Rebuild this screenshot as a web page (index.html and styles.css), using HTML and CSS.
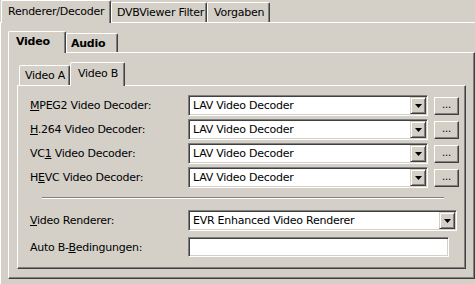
FILE: index.html
```html
<!DOCTYPE html>
<html>
<head>
<meta charset="utf-8">
<link rel="stylesheet" href="styles.css">
</head>
<body>
<div class="outer">
  <div class="strip strip-outer">
    <div class="tab tab-o active t-rd">Renderer/Decoder</div>
    <div class="tab tab-o t-dvb">DVBViewer Filter</div>
    <div class="tab tab-o t-vor">Vorgaben</div>
  </div>
  <div class="pane pane-outer">
    <div class="strip strip-mid">
      <div class="tab tab-m active t-video">Video</div>
      <div class="tab tab-m t-audio">Audio</div>
    </div>
    <div class="pane pane-mid">
      <div class="strip strip-in">
        <div class="tab tab-i t-va">Video A</div>
        <div class="tab tab-i active t-vb">Video B</div>
      </div>
      <div class="pane pane-in">
        <div class="decoders">
          <div class="label"><u>M</u>PEG2 Video Decoder:</div>
          <div class="combo"><span class="val">LAV Video Decoder</span><span class="drop"><svg width="7" height="4" viewBox="0 0 7 4"><polygon points="0,0 7,0 3.5,4" fill="#000"/></svg></span></div>
          <div class="btn">...</div>

          <div class="label"><u>H</u>.264 Video Decoder:</div>
          <div class="combo"><span class="val">LAV Video Decoder</span><span class="drop"><svg width="7" height="4" viewBox="0 0 7 4"><polygon points="0,0 7,0 3.5,4" fill="#000"/></svg></span></div>
          <div class="btn">...</div>

          <div class="label">VC<u>1</u> Video Decoder:</div>
          <div class="combo"><span class="val">LAV Video Decoder</span><span class="drop"><svg width="7" height="4" viewBox="0 0 7 4"><polygon points="0,0 7,0 3.5,4" fill="#000"/></svg></span></div>
          <div class="btn">...</div>

          <div class="label">H<u>E</u>VC Video Decoder:</div>
          <div class="combo"><span class="val">LAV Video Decoder</span><span class="drop"><svg width="7" height="4" viewBox="0 0 7 4"><polygon points="0,0 7,0 3.5,4" fill="#000"/></svg></span></div>
          <div class="btn">...</div>
        </div>
        <div class="sep"></div>
        <div class="lower">
          <div class="row">
            <div class="label"><u>V</u>ideo Renderer:</div>
            <div class="combo combo-wide"><span class="val">EVR Enhanced Video Renderer</span><span class="drop"><svg width="7" height="4" viewBox="0 0 7 4"><polygon points="0,0 7,0 3.5,4" fill="#000"/></svg></span></div>
          </div>
          <div class="row">
            <div class="label">Auto B-<u>B</u>edingungen:</div>
            <div class="edit"></div>
          </div>
        </div>
      </div>
    </div>
  </div>
</div>
</body>
</html>
```

FILE: styles.css
```css
* { box-sizing: border-box; }
html, body {
  margin: 0;
  padding: 0;
  width: 475px;
  height: 284px;
  overflow: hidden;
  background: #d4d0c8;
}
body {
  font-family: "DejaVu Sans", Tahoma, sans-serif;
  font-size: 11px;
  letter-spacing: -0.25px;
  color: #000;
}
u { text-decoration-thickness: 1px; text-underline-offset: 1px; }

.strip {
  display: flex;
  align-items: flex-end;
}
.tab {
  background: #d4d0c8;
  border-top: 1px solid #fff;
  border-left: 1px solid #fff;
  border-right: 1px solid #404040;
  border-radius: 2px 2px 0 0;
  box-shadow: inset -1px 0 #808080;
  display: flex;
  align-items: center;
  white-space: nowrap;
}
.tab.active {
  position: relative;
  z-index: 1;
  margin-bottom: -1px;
  padding-bottom: 1px;
}

/* outer tab control */
.strip-outer { height: 22px; padding-left: 1px; }
.tab-o { height: 20px; }
.tab-o.active { height: 23px; padding-bottom: 2px; }
.t-rd { width: 110px; padding-left: 6px; }
.t-dvb { width: 96px; padding-left: 5px; }
.t-vor { width: 63px; padding-left: 6px; }

.pane {
  background: #d4d0c8;
  border-top: 1px solid #fff;
  border-left: 1px solid #fff;
}
.pane-outer {
  width: 480px;
  height: 270px;
  padding: 8px 0 0 7px;
}

/* middle tab control */
.strip-mid { height: 21px; }
.tab-m { height: 19px; font-weight: bold; padding-top: 1px; }
.tab-m.active { height: 22px; padding-top: 0; padding-bottom: 2px; }
.t-video { width: 58px; padding-left: 7px; }
.t-audio { width: 52px; padding-left: 4px; }

.pane-mid {
  width: 467px;
  height: 227px;
  border-right: 1px solid #404040;
  border-bottom: 1px solid #404040;
  box-shadow: inset -1px -1px #808080;
  padding: 9px 0 0 8px;
}

/* inner tab control */
.strip-in { height: 23px; padding-left: 2px; }
.tab-i { height: 20px; }
.tab-i.active { height: 24px; padding-bottom: 3px; }
.t-va { width: 51px; padding-left: 5px; }
.t-vb { width: 55px; padding-left: 7px; }

.pane-in {
  width: 449px;
  height: 184px;
  border-right: 1px solid #404040;
  border-bottom: 1px solid #404040;
  box-shadow: inset -1px -1px #808080;
  padding: 9px 0 0 12px;
}

.decoders {
  display: grid;
  grid-template-columns: 152px 240px 25px;
  grid-auto-rows: 21px;
  column-gap: 6px;
  row-gap: 3px;
  align-items: center;
}
.label { white-space: nowrap; }

.combo, .edit {
  background: #fff;
  border: 1px solid;
  border-color: #808080 #fff #fff #808080;
  box-shadow: inset 1px 1px #404040, inset -1px -1px #d4d0c8;
  height: 21px;
  padding: 1px;
  display: flex;
  align-items: center;
}
.val {
  flex: 1;
  padding-left: 3px;
  white-space: nowrap;
}
.drop {
  width: 16px;
  height: 17px;
  background: #d4d0c8;
  border: 1px solid;
  border-color: #d4d0c8 #404040 #404040 #d4d0c8;
  box-shadow: inset 1px 1px #fff, inset -1px -1px #808080;
  display: flex;
  align-items: center;
  justify-content: center;
  padding-top: 1px;
}
.drop svg { display: block; }

.btn {
  width: 25px;
  height: 18px;
  background: #d4d0c8;
  border: 1px solid;
  border-color: #fff #404040 #404040 #fff;
  box-shadow: inset -1px -1px #808080;
  display: flex;
  align-items: center;
  justify-content: center;
  font-size: 10px;
  padding-bottom: 2px;
}

.sep {
  margin: 9px 0 0 12px;
  width: 402px;
  height: 2px;
  border-top: 1px solid #808080;
  border-bottom: 1px solid #fff;
}

.lower {
  display: flex;
  flex-direction: column;
  gap: 6px;
  margin-top: 11px;
}
.row {
  display: flex;
  align-items: center;
}
.row .label { width: 158px; }
.combo-wide { width: 269px; }
.edit { width: 261px; height: 20px; }
```
